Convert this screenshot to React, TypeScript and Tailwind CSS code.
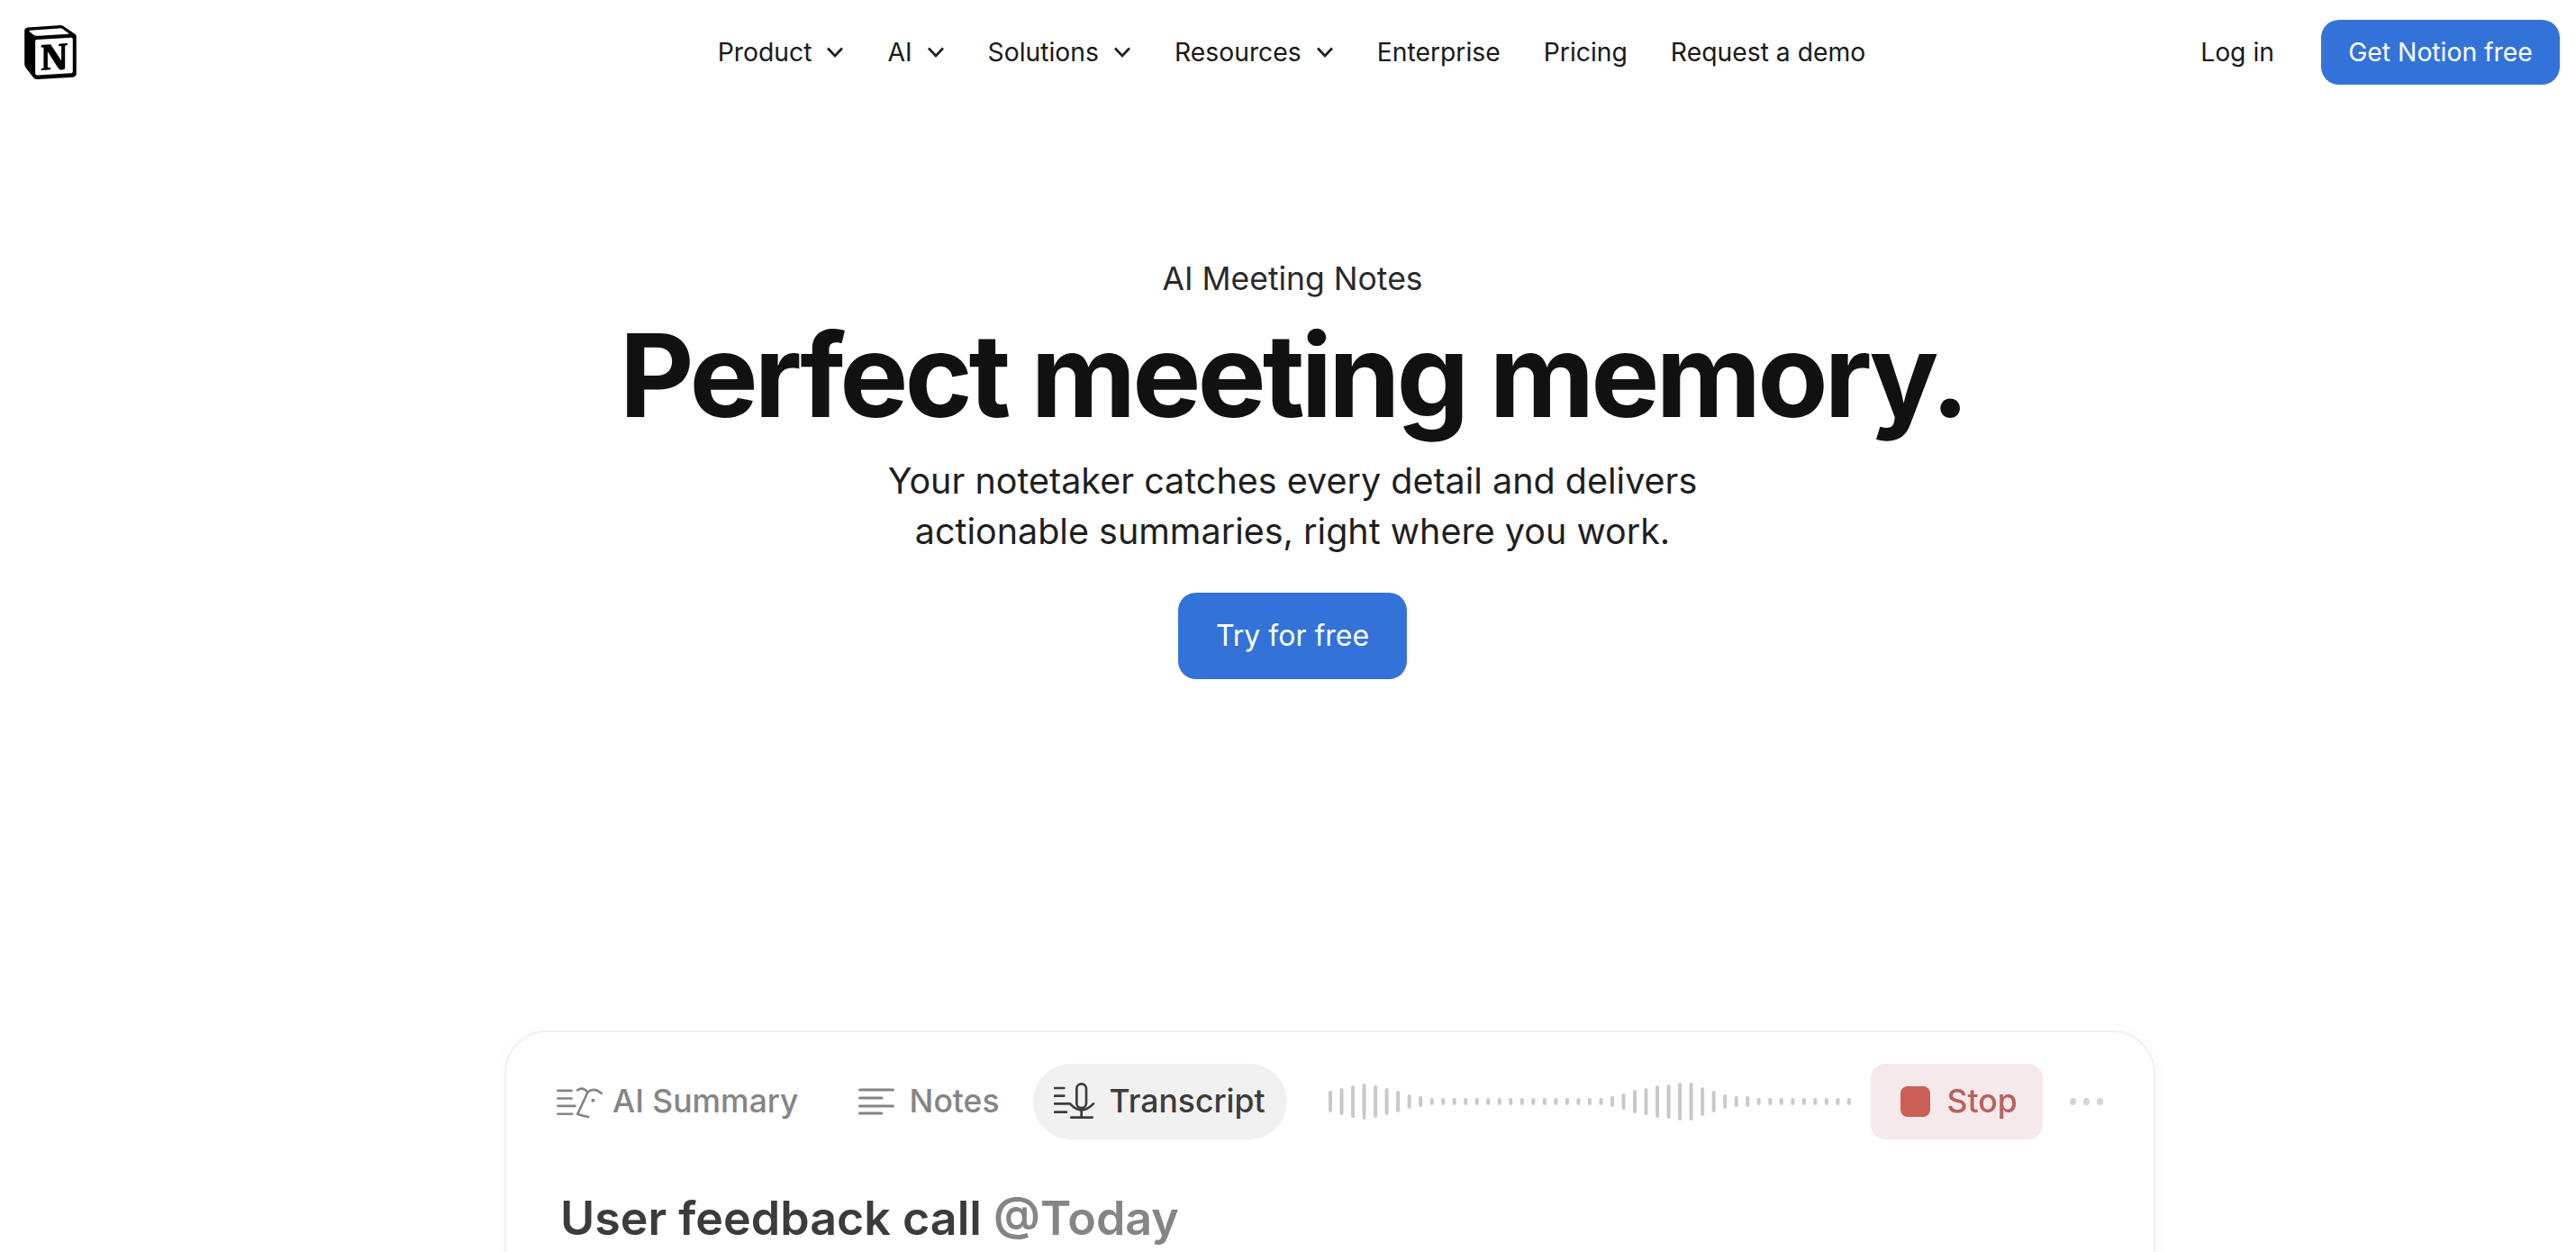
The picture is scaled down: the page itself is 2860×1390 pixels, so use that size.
import { SiNotion } from "react-icons/si";

const navItems = [
  { label: "Product", menu: true },
  { label: "AI", menu: true },
  { label: "Solutions", menu: true },
  { label: "Resources", menu: true },
  { label: "Enterprise", menu: false },
  { label: "Pricing", menu: false },
  { label: "Request a demo", menu: false },
];

const wave = [
  24, 30, 36, 40, 36, 30, 24, 16, 12, 8, 8, 8, 8, 8, 8, 8, 8, 8, 8, 8, 8, 8, 8, 8, 8, 12, 18, 26, 30, 36, 38, 42,
  42, 32, 24, 16, 12, 12, 8, 8, 8, 8, 8, 8, 8, 8, 8,
];

function Chevron() {
  return (
    <svg width="20" height="12" viewBox="0 0 20 12" fill="none" stroke="#1f1f1f" strokeWidth="2.6">
      <path d="M2 1.5 L10 10 L18 1.5" />
    </svg>
  );
}

function SummaryIcon() {
  return (
    <svg width="53" height="37" viewBox="0 0 160 110" fill="none" stroke="#858585" strokeWidth="8" strokeLinecap="round">
      <path d="M4 17 H50 M4 43 H50 M4 68 H62 M4 95 H52" />
      <path d="M70 15 Q88 2 104 22 Q92 50 70 95 Q88 102 106 105" />
      <path d="M104 22 Q126 4 150 26" />
      <circle cx="122" cy="50" r="3" strokeWidth="6" />
    </svg>
  );
}

function NotesIcon() {
  return (
    <svg width="40" height="30" viewBox="0 0 40 30" fill="none" stroke="#858585" strokeWidth="3" strokeLinecap="round">
      <path d="M1.5 2 H38.5 M1.5 11 H26 M1.5 20 H38.5 M1.5 28 H26" />
    </svg>
  );
}

function TranscriptIcon() {
  return (
    <svg width="46" height="42" viewBox="0 0 138 126" fill="none" stroke="#3c3c3c" strokeWidth="8" strokeLinecap="round">
      <path d="M3 18 H34 M3 44 H34 M3 70 H50 M3 98 H42" />
      <rect x="76" y="4" width="32" height="80" rx="16" />
      <path d="M54 70 Q92 112 132 70" />
      <path d="M92 94 V116 M58 116 H128" />
    </svg>
  );
}

function Waveform() {
  return (
    <svg width="582" height="46" viewBox="0 0 582 46" fill="#c9c9c9">
      {wave.map((h, i) => (
        <rect key={i} x={i * 12.52} y={23 - h / 2} width="4" height={h} rx="2" />
      ))}
    </svg>
  );
}

export default function App() {
  return (
    <div className="h-[1390px] overflow-hidden bg-white font-['Inter',sans-serif] text-[#191919]">
      {/* Header */}
      <header className="grid grid-cols-[1fr_auto_1fr] items-center pl-[26px] pr-[18px] pt-[22px]">
        <SiNotion className="h-[60px] w-[60px] text-black" />
        <nav className="flex items-center gap-[48px] text-[28.3px]">
          {navItems.map((item) => (
            <a key={item.label} className="flex items-center gap-[16px]">
              {item.label}
              {item.menu && <Chevron />}
            </a>
          ))}
        </nav>
        <div className="flex items-center justify-end gap-[52px] text-[28.3px]">
          <a>Log in</a>
          <button className="flex h-[72px] w-[265px] items-center justify-center rounded-[20px] bg-[#3373d9] text-white">
            Get Notion free
          </button>
        </div>
      </header>

      {/* Hero */}
      <section className="flex flex-col items-center pl-[10px] pt-[192px] text-center">
        <p className="text-[35.5px] leading-[48px] text-[#2a2a2a]">AI Meeting Notes</p>
        <h1 className="mt-[9px] text-[128px] leading-[148px] font-bold tracking-[-0.032em] text-[#111111]">
          Perfect meeting memory.
        </h1>
        <p className="mt-[15px] text-[39.5px] leading-[56px] text-[#1f1f1f]">
          Your notetaker catches every detail and delivers
          <br />
          actionable summaries, right where you work.
        </p>
        <button className="mt-[40px] flex h-[96px] w-[254px] items-center justify-center rounded-[20px] bg-[#3373d9] text-[32px] text-white">
          Try for free
        </button>
      </section>

      {/* Product card */}
      <section className="ml-[560px] mt-[390px] h-[400px] w-[1833px] rounded-[48px] border-2 border-[#f1f1f1] bg-white pl-[56px] pr-[54px] pt-[35px] shadow-[0_4px_24px_rgba(0,0,0,0.03)]">
        <div className="flex h-[84px] items-center whitespace-nowrap text-[35.5px] font-medium text-[#858585]">
          <div className="flex items-center gap-[9px]">
            <SummaryIcon />
            AI Summary
          </div>
          <div className="ml-[66px] flex items-center gap-[17px]">
            <NotesIcon />
            Notes
          </div>
          <div className="ml-[37px] flex h-[84px] w-[282px] items-center gap-[16px] rounded-full bg-[#f1f1f1] pl-[23px] text-[#3c3c3c]">
            <TranscriptIcon />
            Transcript
          </div>
          <div className="ml-[46px]">
            <Waveform />
          </div>
          <div className="ml-[20px] flex h-[84px] w-[191px] items-center gap-[19px] rounded-[16px] bg-[#f5e9eb] pl-[33px] text-[#b8615f]">
            <span className="h-[34px] w-[33px] rounded-[8px] bg-[#cb5f57]" />
            Stop
          </div>
          <div className="ml-[30px] flex gap-[8px]">
            <span className="h-[8px] w-[7px] rounded-full bg-[#d4d4d4]" />
            <span className="h-[8px] w-[7px] rounded-full bg-[#d4d4d4]" />
            <span className="h-[8px] w-[7px] rounded-full bg-[#d4d4d4]" />
          </div>
        </div>
        <h2 className="ml-[4px] mt-[54px] text-[52px] leading-[68px] font-semibold text-[#3c3c3c]">
          User feedback call <span className="text-[#858585]">@Today</span>
        </h2>
      </section>
    </div>
  );
}
